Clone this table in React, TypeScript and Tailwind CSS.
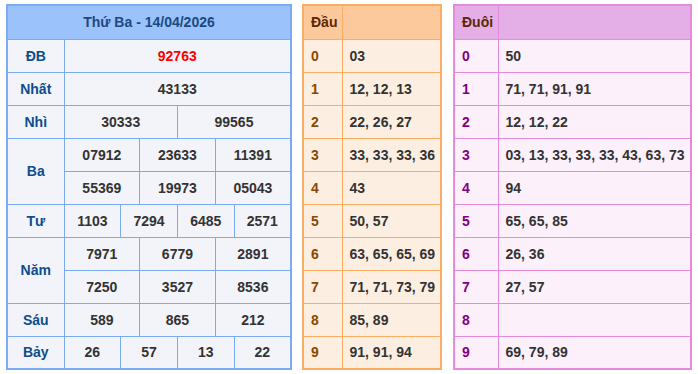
import React from "react";

const font = { fontFamily: '"Liberation Sans", Arial, sans-serif' };

function LeftTable() {
  const cell = "border border-[#7aabf3] text-center text-[#333] font-bold";
  const lab = "border border-[#7aabf3] text-center text-[#0d4d8c] font-bold";
  const rows: { label: string; nums: string[][]; red?: boolean }[] = [
    { label: "ĐB", nums: [["92763"]], red: true },
    { label: "Nhất", nums: [["43133"]] },
    { label: "Nhì", nums: [["30333", "99565"]] },
    { label: "Ba", nums: [["07912", "23633", "11391"], ["55369", "19973", "05043"]] },
    { label: "Tư", nums: [["1103", "7294", "6485", "2571"]] },
    { label: "Năm", nums: [["7971", "6779", "2891"], ["7250", "3527", "8536"]] },
    { label: "Sáu", nums: [["589", "865", "212"]] },
    { label: "Bảy", nums: [["26", "57", "13", "22"]] },
  ];
  const out: React.ReactNode[] = [];
  rows.forEach((r, ri) => {
    r.nums.forEach((line, li) => {
      out.push(
        <tr key={`${ri}-${li}`} className="h-[33px]">
          {li === 0 && (
            <td rowSpan={r.nums.length} className={lab}>
              {r.label}
            </td>
          )}
          {line.map((n, ni) => (
            <td
              key={ni}
              colSpan={12 / line.length}
              className={`${cell} ${r.red ? "text-[#ff0000]" : ""}`}
            >
              {n}
            </td>
          ))}
        </tr>
      );
    });
  });
  return (
    <table className="w-[286px] table-fixed border-collapse border-2 border-[#7aabf3] bg-[#f3f4f9] text-[14px] leading-none">
      <colgroup>
        <col className="w-[57px]" />
        {Array.from({ length: 12 }).map((_, i) => (
          <col key={i} />
        ))}
      </colgroup>
      <thead>
        <tr className="h-[34px]">
          <th colSpan={13} className="border border-[#7aabf3] bg-[#9cc2fb] text-[#1b4a80] font-bold">
            Thứ Ba - 14/04/2026
          </th>
        </tr>
      </thead>
      <tbody>{out}</tbody>
    </table>
  );
}

function LotoTable({
  title,
  data,
  width,
  firstCol,
  border,
  head,
  body,
  digit,
}: {
  title: string;
  data: string[];
  width: string;
  firstCol: string;
  border: string;
  head: string;
  body: string;
  digit: string;
}) {
  return (
    <table className={`${width} table-fixed border-collapse border-2 ${border} ${body} text-[14px] leading-none`}>
      <colgroup>
        <col className={firstCol} />
        <col />
      </colgroup>
      <thead>
        <tr className="h-[34px]">
          <th className={`border ${border} ${head} text-left pl-[7px] font-bold text-[#5e2606]`}>{title}</th>
          <th className={`border ${border} ${head}`}></th>
        </tr>
      </thead>
      <tbody>
        {data.map((d, i) => (
          <tr key={i} className="h-[33px]">
            <td className={`border ${border} pl-[7px] font-bold ${digit}`}>{i}</td>
            <td className={`border ${border} pl-[7px] font-bold text-[#333] whitespace-nowrap`}>{d}</td>
          </tr>
        ))}
      </tbody>
    </table>
  );
}

export default function App() {
  return (
    <div className="bg-white w-[698px] h-[374px] pl-[6px] pt-[4px] flex items-start" style={font}>
      <LeftTable />
      <div className="ml-[10px]">
        <LotoTable
          title="Đầu"
          data={["03", "12, 12, 13", "22, 26, 27", "33, 33, 33, 36", "43", "50, 57", "63, 65, 65, 69", "71, 71, 73, 79", "85, 89", "91, 91, 94"]}
          width="w-[140px]"
          firstCol="w-[39px]"
          border="border-[#f9ae63]"
          head="bg-[#fbc99c]"
          body="bg-[#fdeee2]"
          digit="text-[#8b4800]"
        />
      </div>
      <div className="ml-[11px]">
        <LotoTable
          title="Đuôi"
          data={["50", "71, 71, 91, 91", "12, 12, 22", "03, 13, 33, 33, 33, 43, 63, 73", "94", "65, 65, 85", "26, 36", "27, 57", "", "69, 79, 89"]}
          width="w-[239px]"
          firstCol="w-[44px]"
          border="border-[#e68ae0]"
          head="bg-[#e4afe7]"
          body="bg-[#fcf0fa]"
          digit="text-[#800080]"
        />
      </div>
    </div>
  );
}
